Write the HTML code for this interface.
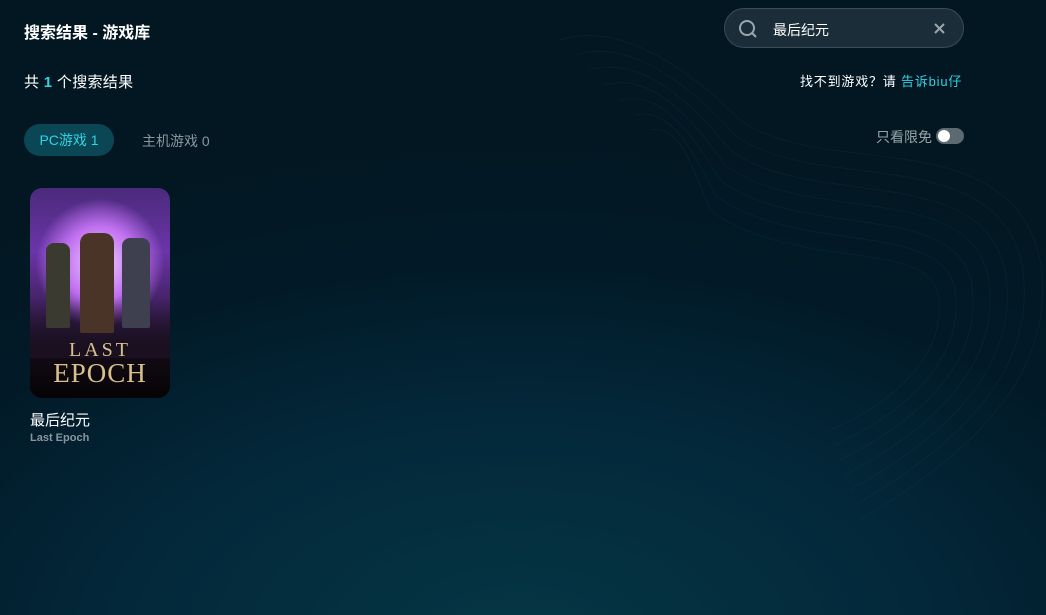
<!DOCTYPE html>
<html><head><meta charset="utf-8"><style>
*{margin:0;padding:0;box-sizing:border-box}
body{width:1046px;height:615px;overflow:hidden;font-family:"Liberation Sans","Noto Sans CJK SC",sans-serif;
background:radial-gradient(ellipse 900px 500px at 520px 640px,#053644 0%,#03283a 45%,#021a28 75%,#021722 100%);position:relative;color:#fff}
.abs{position:absolute}
</style></head><body>
<svg class="abs" style="left:0;top:0" width="1046" height="615">
<g fill="none" stroke="#1a5a66" stroke-opacity="0.16" stroke-width="1">
<path d="M560 40 C620 20 690 70 740 120 C820 180 1010 120 1040 260 C1060 380 960 460 860 520"/>
<path d="M575 55 C630 38 690 85 735 135 C815 195 995 140 1022 265 C1040 375 950 450 855 505"/>
<path d="M590 70 C640 55 690 100 730 150 C810 210 980 160 1005 270 C1022 370 940 440 850 490"/>
<path d="M605 85 C650 72 690 115 725 165 C805 225 965 180 988 275 C1004 365 930 430 845 475"/>
<path d="M620 100 C660 90 690 130 720 180 C800 240 950 200 971 280 C986 360 920 420 840 460"/>
<path d="M635 115 C670 108 690 145 715 195 C795 255 935 220 954 285 C968 355 910 410 835 445"/>
<path d="M650 130 C680 126 690 160 710 210 C790 270 920 240 937 290 C950 350 900 400 830 430"/>
</g></svg>
<div class="abs" style="left:24px;top:19px;font-size:16px;font-weight:bold">搜索结果 - 游戏库</div>
<div class="abs" style="left:724px;top:8px;width:240px;height:40px;border-radius:20px;background:#1a2d38;border:1px solid #3a4c56"></div>
<svg class="abs" style="left:738px;top:19px" width="20" height="20"><circle cx="9" cy="9" r="7" fill="none" stroke="#9aa6ac" stroke-width="2"/><path d="M14 14l4 4" stroke="#9aa6ac" stroke-width="2"/></svg>
<div class="abs" style="left:773px;top:20px;font-size:14px">最后纪元</div>
<svg class="abs" style="left:934px;top:23px" width="11" height="11"><path d="M1 1l9 9M10 1L1 10" stroke="#9aa6ac" stroke-width="2"/></svg>
<div class="abs" style="left:24px;top:71px;font-size:15px;letter-spacing:0.3px">共 <b style="color:#2fd3e6">1</b> 个搜索结果</div>
<div class="abs" style="left:800px;top:71px;font-size:13px;letter-spacing:0.8px">找不到游戏？请 <span style="color:#2fd3e6">告诉biu仔</span></div>
<div class="abs" style="left:24px;top:124px;width:90px;height:32px;border-radius:16px;background:#0b4654;color:#2fd3e6;font-size:14px;line-height:32px;text-align:center">PC游戏 1</div>
<div class="abs" style="left:142px;top:131px;font-size:14px;color:#8a969c">主机游戏 0</div>
<div class="abs" style="left:876px;top:127px;font-size:14px;color:#9aa4a8">只看限免</div>
<div class="abs" style="left:936px;top:128px;width:28px;height:16px;border-radius:8px;background:#5b6a70"></div>
<div class="abs" style="left:938px;top:130px;width:12px;height:12px;border-radius:6px;background:#fff"></div>
<div class="abs" style="left:30px;top:188px;width:140px;height:210px;border-radius:12px;overflow:hidden;background:linear-gradient(#4a2a7a 0%,#6a35a8 30%,#3a1e55 60%,#120a14 80%,#050305 100%)">
<div class="abs" style="left:5px;top:10px;width:130px;height:130px;border-radius:50%;background:radial-gradient(circle,#f0d0ff 0%,#c070f0 40%,rgba(140,60,200,0) 70%)"></div>
<div class="abs" style="left:0;top:110px;width:140px;height:60px;background:linear-gradient(rgba(40,20,40,0),#1a1020)"></div>
<div class="abs" style="left:16px;top:55px;width:24px;height:85px;background:#3a3a30;border-radius:8px 8px 2px 2px"></div>
<div class="abs" style="left:50px;top:45px;width:34px;height:100px;background:#4a3428;border-radius:10px 10px 2px 2px"></div>
<div class="abs" style="left:92px;top:50px;width:28px;height:90px;background:#3e4050;border-radius:8px 8px 2px 2px"></div>
<div class="abs" style="left:0;top:152px;width:140px;font-family:'Liberation Serif',serif;color:#d8c08a;text-align:center;line-height:1">
<div style="font-size:20px;letter-spacing:3px">LAST</div>
<div style="font-size:27px;letter-spacing:1px">EPOCH</div></div>
</div>
<div class="abs" style="left:30px;top:409px;font-size:15px">最后纪元</div>
<div class="abs" style="left:30px;top:432px;font-size:11px;color:#8a969c;font-weight:bold">Last Epoch</div>
</body></html>
